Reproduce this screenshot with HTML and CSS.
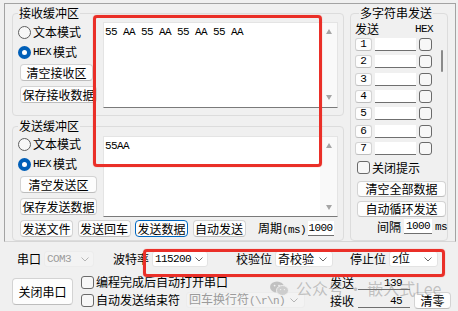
FILE: index.html
```html
<!DOCTYPE html>
<html lang="zh-CN">
<head>
    <meta charset="UTF-8">
    <meta name="viewport" content="width=device-width, initial-scale=1.0">
    <title>串口调试助手</title>
    <link rel="stylesheet" href="styles.css">
</head>
<body>
    <div class="app">
        <div class="panel">
            <div class="left">
                <!-- 接收缓冲区 -->
                <fieldset class="group recv">
                    <legend>接收缓冲区</legend>
                    <div class="buf">
                        <div class="side">
                            <label class="opt"><span class="radio"></span>文本模式</label>
                            <label class="opt"><span class="radio on"></span><span class="en">HEX</span>模式</label>
                            <button class="btn side-btn short">清空接收区</button>
                            <button class="btn side-btn">保存接收数据</button>
                        </div>
                        <div class="edit recv-edit">
                            <div class="edit-text">55 AA 55 AA 55 AA 55 AA</div>
                            <div class="vscroll"><span class="arrow up"></span><span class="arrow down"></span></div>
                        </div>
                    </div>
                </fieldset>

                <!-- 发送缓冲区 -->
                <fieldset class="group send">
                    <legend>发送缓冲区</legend>
                    <div class="buf">
                        <div class="side">
                            <label class="opt"><span class="radio"></span>文本模式</label>
                            <label class="opt"><span class="radio on"></span><span class="en">HEX</span>模式</label>
                            <button class="btn side-btn">清空发送区</button>
                            <button class="btn side-btn">保存发送数据</button>
                        </div>
                        <div class="edit send-edit">
                            <div class="edit-text">55AA</div>
                            <div class="vscroll"><span class="arrow up"></span><span class="arrow down"></span></div>
                        </div>
                    </div>
                    <div class="send-bar">
                        <button class="btn bar-btn">发送文件</button>
                        <button class="btn bar-btn">发送回车</button>
                        <button class="btn bar-btn focus">发送数据</button>
                        <button class="btn bar-btn">自动发送</button>
                        <span class="period">周期<span class="en">(ms)</span></span>
                        <span class="field period-field en">1000</span>
                    </div>
                </fieldset>
            </div>

            <!-- 多字符串发送 -->
            <fieldset class="group multi">
                <legend>多字符串发送</legend>
                <div class="multi-head"><span>发送</span><span class="en">HEX</span></div>
                <div class="multi-list">
                    <div class="rows">
                        <div class="row"><button class="btn num">1</button><span class="line"></span><span class="check"></span></div>
                        <div class="row"><button class="btn num">2</button><span class="line"></span><span class="check"></span></div>
                        <div class="row"><button class="btn num">3</button><span class="line"></span><span class="check"></span></div>
                        <div class="row"><button class="btn num">4</button><span class="line"></span><span class="check"></span></div>
                        <div class="row"><button class="btn num">5</button><span class="line"></span><span class="check"></span></div>
                        <div class="row"><button class="btn num">6</button><span class="line"></span><span class="check"></span></div>
                        <div class="row"><button class="btn num">7</button><span class="line"></span><span class="check"></span></div>
                    </div>
                    <div class="track"><span class="thumb"></span></div>
                </div>
                <label class="opt tip"><span class="check"></span>关闭提示</label>
                <button class="btn wide">清空全部数据</button>
                <button class="btn wide second">自动循环发送</button>
                <div class="interval">间隔<span class="field en">1000</span><span class="en">ms</span></div>
            </fieldset>
        </div>

        <!-- 串口设置 -->
        <div class="port">
            <div class="port-row">
                <span class="lbl">串口</span>
                <span class="select off sel-com"><span class="en">COM3</span><svg class="chev" width="8" height="5" viewBox="0 0 8 5"><polyline points="0.5,0.5 4,4 7.5,0.5"/></svg></span>
                <span class="lbl gap-s">波特率</span>
                <span class="select sel-baud"><span class="en">115200</span><svg class="chev" width="8" height="5" viewBox="0 0 8 5"><polyline points="0.5,0.5 4,4 7.5,0.5"/></svg></span>
                <span class="lbl gap-l">校验位</span>
                <span class="select sel-parity"><span>奇校验</span><svg class="chev" width="8" height="5" viewBox="0 0 8 5"><polyline points="0.5,0.5 4,4 7.5,0.5"/></svg></span>
                <span class="lbl gap-m">停止位</span>
                <span class="select sel-stop"><span><span class="en">2</span>位</span><svg class="chev" width="8" height="5" viewBox="0 0 8 5"><polyline points="0.5,0.5 4,4 7.5,0.5"/></svg></span>
            </div>
            <div class="port-row2">
                <button class="btn close-btn">关闭串口</button>
                <div class="opts">
                    <label class="opt2"><span class="check"></span>编程完成后自动打开串口</label>
                    <label class="opt2"><span class="check"></span>自动发送结束符<span class="select off sel-eol"><span>回车换行符<span class="en">(\r\n)</span></span><svg class="chev" width="8" height="5" viewBox="0 0 8 5"><polyline points="0.5,0.5 4,4 7.5,0.5"/></svg></span></label>
                </div>
                <div class="counters">
                    <div class="count"><span>发送</span><span class="field count-field en">139</span></div>
                    <div class="count second"><span>接收</span><span class="field count-field en">45</span><button class="btn zero">清零</button></div>
                </div>
            </div>
        </div>

        <!-- 标注框 -->
        <div class="mark mark-buffer"></div>
        <div class="mark mark-port"></div>

        <div class="watermark">
            <svg width="19" height="15" viewBox="0 0 19 15">
                <ellipse cx="7" cy="6" rx="7" ry="5.6" fill="#bdbdbd"/>
                <ellipse cx="12.5" cy="9.5" rx="6" ry="5" fill="#cacaca" stroke="#f0f0f0" stroke-width="1"/>
                <circle cx="4.6" cy="4.6" r="0.9" fill="#f0f0f0"/>
                <circle cx="9" cy="4.6" r="0.9" fill="#f0f0f0"/>
                <circle cx="10.6" cy="8.6" r="0.7" fill="#f0f0f0"/>
                <circle cx="14.4" cy="8.6" r="0.7" fill="#f0f0f0"/>
            </svg>
            <span>公众号 · 嵌入式Lee</span>
        </div>
    </div>
</body>
</html>
```

FILE: styles.css
```css
/* Global */
* {
    margin: 0;
    padding: 0;
    box-sizing: border-box;
}

body {
    width: 458px;
    height: 311px;
    overflow: hidden;
    background: #f0f0f0;
    font-family: "Noto Sans CJK SC", "Noto Sans", sans-serif;
    font-size: 12px;
    line-height: 14px;
    color: #000;
}

.app {
    position: relative;
    width: 458px;
    height: 311px;
}

/* ascii text in the small bitmap-like font */
.en {
    font-family: "Liberation Mono", monospace;
    font-size: 11px;
    letter-spacing: -0.6px;
}

/* Top tab page */
.panel {
    display: flex;
    gap: 6px;
    height: 239px;
    margin: 3px 2px 0 4px;
    padding: 2px 0 0 7px;
    border: 1px solid #a3a3a3;
    border-bottom-color: #d6d6d6;
}

.left {
    width: 332px;
    display: flex;
    flex-direction: column;
}

.group {
    border: 1px solid #dcdcdc;
    border-radius: 4px;
    min-width: 0;
}

.group legend {
    padding: 0 1px;
    line-height: 14px;
}

.recv {
    height: 110px;
    padding: 2px 5px 0 5px;
}

.send {
    height: 122px;
    margin-top: 3px;
    padding: 1px 5px 0 5px;
}

.buf {
    display: flex;
}

.side {
    width: 85px;
    display: flex;
    flex-direction: column;
}

.opt {
    display: flex;
    align-items: center;
    gap: 2px;
    height: 20px;
    white-space: nowrap;
}

.radio {
    width: 13px;
    height: 13px;
    border: 1px solid #5e5e5e;
    border-radius: 50%;
    background: #f7f7f7;
}

.radio.on {
    border: 4px solid #005fb8;
    background: #fff;
}

.check {
    flex: none;
    width: 13px;
    height: 13px;
    border: 1px solid #6a6a6a;
    border-radius: 3px;
    background: #f7f7f7;
}

/* Buttons */
.btn {
    display: flex;
    align-items: center;
    justify-content: center;
    height: 17px;
    padding: 0;
    font: inherit;
    line-height: 14px;
    color: #000;
    background: #fdfdfd;
    border: 1px solid #d3d3d3;
    border-bottom-color: #bdbdbd;
    border-radius: 4px;
    white-space: nowrap;
}

.side-btn {
    width: 77px;
    margin: 2px 0 0 2px;
}

.side-btn + .side-btn {
    margin-top: 5px;
}

.side-btn.short {
    width: 73px;
}

/* Edit boxes */
.edit {
    display: flex;
    width: 235px;
    background: #fff;
    border: 1px solid #e4e4e4;
    border-bottom-color: #7a7a7a;
}

.recv-edit {
    height: 86px;
}

.send-edit {
    height: 81px;
    margin-top: 2px;
}

.edit-text {
    flex: 1;
    padding: 2px 1px;
    font-family: "Liberation Mono", monospace;
    font-size: 11px;
    line-height: 14px;
    letter-spacing: -0.6px;
}

.vscroll {
    width: 17px;
    display: flex;
    flex-direction: column;
    justify-content: space-between;
    align-items: center;
    padding: 6px 0;
    background: #f9f9f9;
}

.recv-edit .vscroll {
    padding: 6px 0 7px;
}

.arrow {
    width: 0;
    height: 0;
    border-left: 3.5px solid transparent;
    border-right: 3.5px solid transparent;
}

.arrow.up {
    border-bottom: 5px solid #a5a5a5;
}

.arrow.down {
    border-top: 5px solid #a5a5a5;
}

.send-bar {
    display: flex;
    align-items: center;
    gap: 4.5px;
    margin: 3px 0 0 2px;
}

.bar-btn {
    width: 53px;
}

.bar-btn.focus {
    border-color: #0067c0;
}

.period {
    margin-left: 8px;
    white-space: nowrap;
}

.field {
    display: block;
    height: 15px;
    background: #fff;
    border-bottom: 1px solid #6f6f6f;
    overflow: hidden;
    white-space: nowrap;
    line-height: 14px;
}

.period-field {
    width: 26px;
    margin-left: -3px;
    padding-left: 1px;
}

/* Multi string group */
.multi {
    width: 98px;
    height: 235px;
    padding: 1px 0 0 4px;
}

.multi legend {
    margin-left: 4px;
}

.multi-head {
    display: flex;
    justify-content: space-between;
    width: 78px;
    height: 16px;
    line-height: 16px;
}

.multi-list {
    display: flex;
    margin-top: 1px;
}

.rows {
    display: flex;
    flex-direction: column;
    gap: 4.33px;
}

.row {
    display: flex;
    align-items: center;
    gap: 3px;
    height: 13px;
}

.num {
    width: 17px;
    height: 13px;
    border-radius: 3px;
    font-family: "Liberation Mono", monospace;
    font-size: 11px;
    line-height: 11px;
}

.line {
    width: 41px;
    height: 13px;
    background: #fff;
    border-bottom: 1px solid #6f6f6f;
}

.track {
    margin-left: 9px;
    width: 2px;
}

.thumb {
    display: block;
    width: 2px;
    height: 22px;
    margin-top: 12px;
    border-radius: 1px;
    background: #8a8a8a;
}

.tip {
    height: 14px;
    margin: 6px 0 0 2px;
}

.wide {
    width: 89px;
    height: 16px;
    margin: 6px 0 0 2px;
}

.wide.second {
    margin-top: 4px;
}

.interval {
    display: flex;
    align-items: center;
    justify-content: flex-end;
    gap: 3px;
    height: 16px;
    margin-top: 2px;
}

.interval .field {
    width: 28px;
    padding-left: 2px;
}

/* Serial port settings */
.port-row {
    display: flex;
    align-items: center;
    height: 16px;
    margin-top: 9px;
    padding-left: 17px;
}

.lbl {
    margin-right: 3px;
    white-space: nowrap;
}

.gap-s {
    margin-left: 19px;
}

.gap-l {
    margin-left: 28px;
}

.gap-m {
    margin-left: 17px;
}

.select {
    display: flex;
    align-items: center;
    justify-content: space-between;
    height: 16px;
    padding: 0 5px 0 2px;
    background: #fff;
    border: 1px solid #e3e3e3;
    border-radius: 3px;
    white-space: nowrap;
}

.chev {
    flex: none;
    fill: none;
    stroke: #6b6b6b;
    stroke-width: 1;
}

.select.off {
    background: #f3f3f3;
    border-color: #ececec;
    color: #9b9b9b;
}

.select.off .chev {
    stroke: #b5b5b5;
}

.sel-com {
    width: 50px;
    padding-right: 4px;
}

.sel-baud {
    width: 56px;
    padding-right: 4px;
}

.sel-parity {
    width: 58px;
}

.sel-stop {
    width: 49px;
}

.port-row2 {
    display: flex;
    margin-top: 8px;
    padding: 0 7px 0 12px;
}

.close-btn {
    width: 61px;
    height: 27px;
    margin-top: 3px;
}

.opts {
    display: flex;
    flex-direction: column;
    gap: 4px;
    margin-left: 8px;
}

.opt2 {
    display: flex;
    align-items: center;
    gap: 2px;
    height: 14px;
    white-space: nowrap;
}

.sel-eol {
    width: 119px;
    margin-left: 4px;
    padding-right: 6px;
}

.counters {
    margin-left: auto;
    display: flex;
    flex-direction: column;
    gap: 2px;
}

.count {
    display: flex;
    align-items: center;
    gap: 4px;
    height: 15px;
}

.count.second {
    height: 17px;
}

.count-field {
    width: 52px;
    height: 14px;
    text-align: right;
    padding-right: 8px;
    background: transparent;
}

.zero {
    width: 37px;
    height: 17px;
}

/* Red annotation boxes drawn over the screenshot */
.mark {
    position: absolute;
    border: 3px solid #ea2f28;
    border-radius: 4px;
    box-shadow: 0 0 1px rgba(234, 47, 40, 0.7);
}

.mark-buffer {
    left: 93px;
    top: 12px;
    width: 229px;
    height: 152px;
}

.mark-port {
    left: 143px;
    top: 246px;
    width: 302px;
    height: 28px;
}

.watermark {
    position: absolute;
    left: 270px;
    top: 276px;
    display: flex;
    align-items: center;
    gap: 7px;
    font-size: 16px;
    line-height: 18px;
    color: rgba(120, 120, 120, 0.45);
    white-space: nowrap;
    opacity: 0.9;
}
```
